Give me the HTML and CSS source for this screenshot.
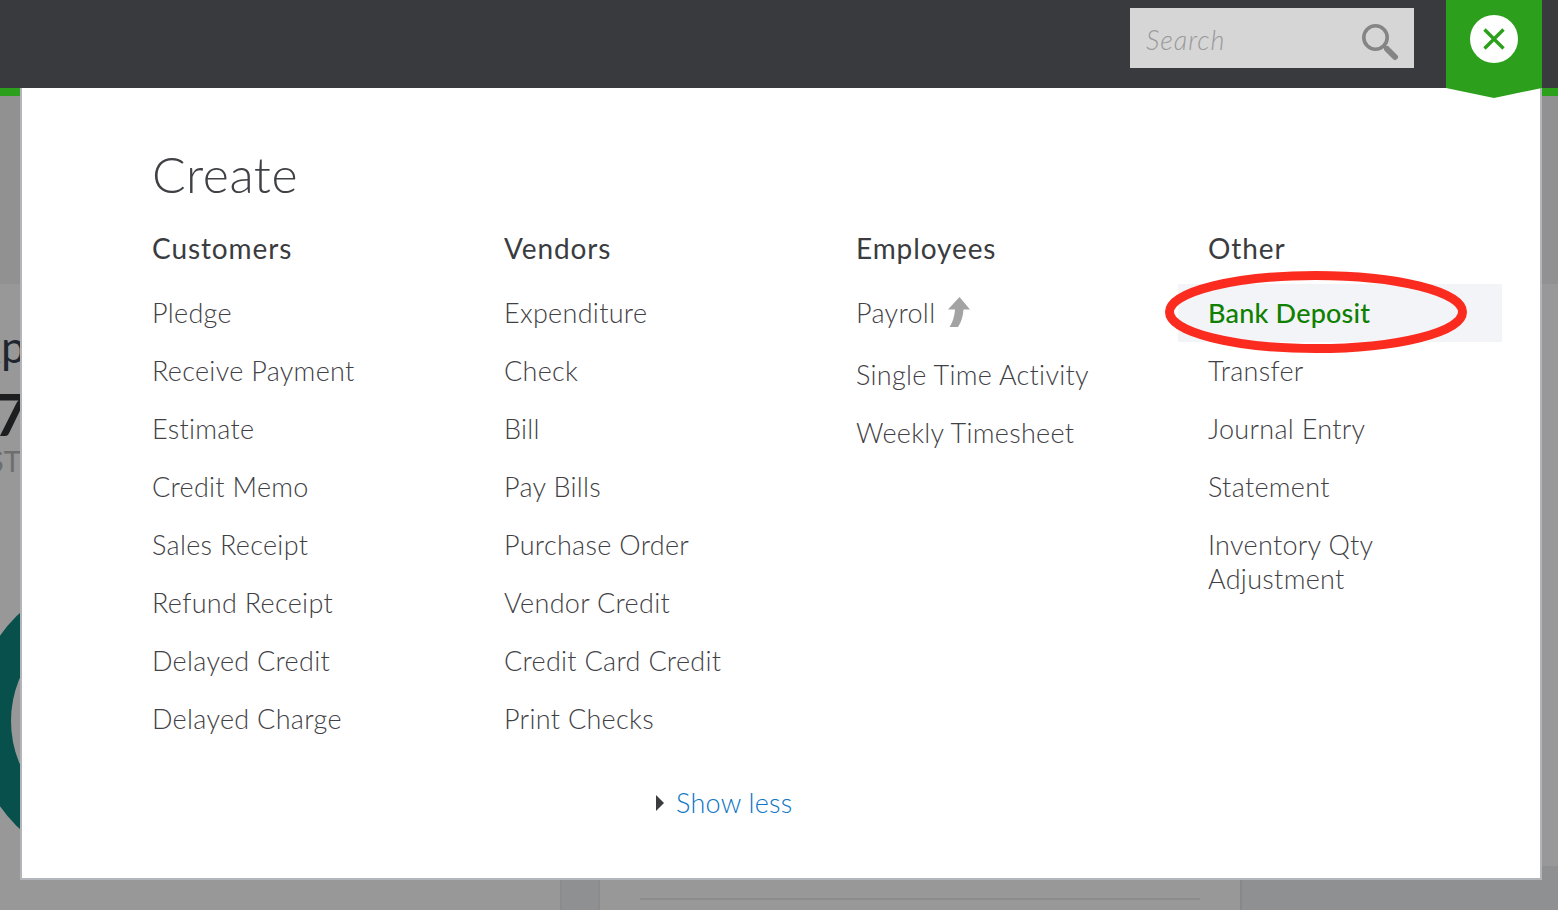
FILE: index.html
```html
<!DOCTYPE html>
<html lang="en">
<head>
<meta charset="utf-8">
<title>Create</title>
<link rel="stylesheet" href="styles.css">
</head>
<body>
<header class="topbar">
  <div class="search">
    <span class="search-text">Search</span>
    <svg class="search-icon" width="38" height="38" viewBox="0 0 38 38" aria-hidden="true">
      <circle cx="14.500" cy="14.500" r="11.700" fill="none" stroke="#858585" stroke-width="3.600"/>
      <path d="M23 23l2.500 2.500" fill="none" stroke="#858585" stroke-width="3"/>
      <path d="M26 26l8 8" fill="none" stroke="#858585" stroke-width="6" stroke-linecap="round"/>
    </svg>
  </div>
  <div class="close-tab">
    <span class="close-btn">
      <svg width="24" height="24" viewBox="0 0 24 24" aria-hidden="true"><path d="M2.500 2.500l19 19M21.500 2.500l-19 19" fill="none" stroke="#2ca01c" stroke-width="3.400"/></svg>
    </span>
  </div>
</header>
<div class="greenline"></div>
<div class="backdrop">
  <div class="bg-top"></div>
  <div class="bg-word">xp</div>
  <div class="bg-num">7,</div>
  <div class="bg-sub">ST</div>
  <div class="bg-ring"></div>
  <div class="bg-panel">
    <div class="bg-strip"></div>
    <div class="bg-center"><div class="bg-rule"></div></div>
    <div class="bg-side"></div>
  </div>
</div>
<main class="modal">
  <h1 class="title">Create</h1>
  <div class="cols">
    <section class="col">
      <h2 class="col-head">Customers</h2>
      <ul class="list">
        <li class="item">Pledge</li>
        <li class="item">Receive Payment</li>
        <li class="item">Estimate</li>
        <li class="item">Credit Memo</li>
        <li class="item">Sales Receipt</li>
        <li class="item">Refund Receipt</li>
        <li class="item">Delayed Credit</li>
        <li class="item">Delayed Charge</li>
      </ul>
    </section>
    <section class="col">
      <h2 class="col-head">Vendors</h2>
      <ul class="list">
        <li class="item">Expenditure</li>
        <li class="item">Check</li>
        <li class="item">Bill</li>
        <li class="item">Pay Bills</li>
        <li class="item">Purchase Order</li>
        <li class="item">Vendor Credit</li>
        <li class="item">Credit Card Credit</li>
        <li class="item">Print Checks</li>
      </ul>
    </section>
    <section class="col">
      <h2 class="col-head">Employees</h2>
      <ul class="list">
        <li class="item item-payroll">Payroll
          <svg class="upgrade" width="24" height="32" viewBox="0 0 24 32" aria-hidden="true"><path d="M13.500 1L24 13.500h-6.500C17 20 15.500 26 12 31H3.500C7.500 25 8.500 19 9 13.500H2z" fill="#a3a3a3"/></svg>
        </li>
        <li class="item">Single Time Activity</li>
        <li class="item">Weekly Timesheet</li>
      </ul>
    </section>
    <section class="col">
      <h2 class="col-head">Other</h2>
      <ul class="list">
        <li class="item item-active">Bank Deposit
          <svg class="ring" width="306" height="86" viewBox="0 0 306 86" aria-hidden="true"><ellipse cx="152" cy="42" rx="146.500" ry="36.500" fill="none" stroke="#fb2c1f" stroke-width="9"/></svg>
        </li>
        <li class="item">Transfer</li>
        <li class="item">Journal Entry</li>
        <li class="item">Statement</li>
        <li class="item">Inventory Qty<br>Adjustment</li>
      </ul>
    </section>
  </div>
  <div class="more">
    <span class="caret"></span>
    <a class="more-link">Show less</a>
  </div>
</main>
</body>
</html>
```
FILE: styles.css
```css
* { box-sizing: border-box; }
html, body { margin: 0; height: 100%; }
body {
  width: 1558px;
  height: 910px;
  overflow: hidden;
  position: relative;
  background: #989898;
  font-family: "Lato", "Liberation Sans", sans-serif;
  color: #3f4145;
}
.topbar {
  height: 88px;
  background: #393a3e;
  display: flex;
  justify-content: flex-end;
  align-items: flex-start;
  padding-right: 16px;
  gap: 32px;
  position: relative;
}
.search {
  margin-top: 8px;
  width: 284px;
  height: 60px;
  background: #d6d6d6;
  display: flex;
  align-items: center;
  justify-content: space-between;
  padding: 0 15px 0 16px;
}
.search-text {
  font-size: 27px;
  line-height: 34px;
  margin-top: 4px;
  font-style: italic;
  font-weight: 300;
  color: #9a9a9a;
  letter-spacing: 0.9px;
}
.search-icon { margin-top: 8px; }
.close-tab {
  position: relative;
  z-index: 3;
  width: 96px;
  height: 98px;
  background: #2ca01c;
  clip-path: polygon(0 0, 100% 0, 100% 88px, 50% 100%, 0 88px);
  display: flex;
  justify-content: center;
  padding-top: 15px;
}
.close-btn {
  width: 48px;
  height: 48px;
  border-radius: 50%;
  background: #fff;
  display: flex;
  align-items: center;
  justify-content: center;
}
.greenline { height: 8px; background: #2ca01c; }
.backdrop { position: absolute; inset: 96px 0 0 0; overflow: hidden; }
.bg-top { height: 188px; background: #919191; }
.bg-word { position: absolute; left: -21px; top: 228px; font-size: 44px; color: #1f2630; line-height: 44px; }
.bg-num { position: absolute; left: -6px; top: 290px; font-size: 58px; font-weight: 700; color: #1d1e20; line-height: 56px; }
.bg-sub { position: absolute; left: -12px; top: 353px; font-size: 29px; color: #6e6e6e; line-height: 24px; }
.bg-ring {
  position: absolute;
  left: -27px;
  top: 477px;
  width: 296px;
  height: 296px;
  border-radius: 50%;
  border: 38px solid #07504b;
}
.bg-panel {
  position: absolute;
  left: 560px;
  right: 0;
  top: 770px;
  bottom: 0;
  display: flex;
}
.bg-strip { width: 40px; background: #8f9092; border-left: 2px solid #8c8c8d; border-right: 2px solid #8c8c8d; }
.bg-center { width: 640px; padding: 32px 40px 0; }
.bg-rule { width: 560px; height: 2px; background: #8c8c8c; }
.bg-side { flex: 1; background: #8f9092; border-left: 2px solid #87888a; }
.modal {
  position: absolute;
  left: 20px;
  top: 88px;
  width: 1522px;
  height: 792px;
  background: #fff;
  border: 2px solid #b2b5ba;
  border-top: 0;
  padding-left: 130px;
  z-index: 2;
}
.title {
  margin: 56px 0 0;
  height: 60px;
  font-size: 50px;
  line-height: 60px;
  font-weight: 300;
  color: #3f4145;
  letter-spacing: 0.5px;
}
.cols { display: flex; margin-top: 26px; }
.col { width: 352px; flex: none; }
.col-head {
  margin: 0;
  font-size: 28px;
  line-height: 36px;
  font-weight: 400;
  color: #3a3c40;
  letter-spacing: 0.9px;
  height: 54px;
}
.list { list-style: none; margin: 0; padding: 0; }
.item {
  font-size: 27px;
  line-height: 34px;
  font-weight: 300;
  padding: 12px 0;
  color: #3f4145;
  letter-spacing: 0.3px;
}
.item-payroll { display: flex; align-items: center; gap: 11px; padding-bottom: 16px; }
.upgrade { margin-top: -2px; }
.item-active {
  position: relative;
  margin-left: -30px;
  padding-left: 30px;
  width: 324px;
  background: #f3f4f8;
  color: #108000;
  font-weight: 500;
  letter-spacing: 0.2px;
}
.ring { position: absolute; left: -14px; top: -14px; }
.more {
  position: absolute;
  left: 634px;
  top: 698px;
  display: flex;
  align-items: center;
  gap: 12px;
}
.caret {
  width: 0;
  height: 0;
  border-left: 8px solid #3a3c40;
  border-top: 8px solid transparent;
  border-bottom: 8px solid transparent;
}
.more-link { font-size: 27px; line-height: 34px; font-weight: 300; color: #0d76c4; letter-spacing: 0.25px; }
```
